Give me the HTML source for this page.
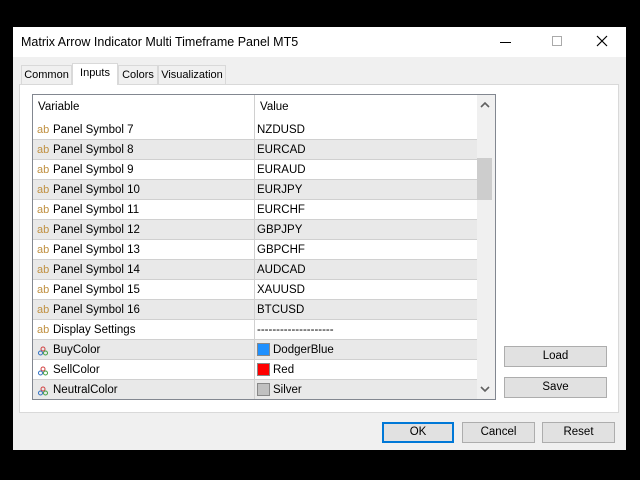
<!DOCTYPE html><html><head><style>
*{margin:0;padding:0;box-sizing:border-box}
body{width:640px;height:480px;background:#000;font-family:"Liberation Sans",sans-serif;font-size:11.5px;color:#000;position:relative;overflow:hidden}
.a{position:absolute}
.win{left:13px;top:27px;width:613px;height:423px;background:#f0f0f0}
.title{left:0;top:0;width:613px;height:30px;background:#fff}
.tab{top:38px;height:19px;border:1px solid #d9d9d9;border-bottom:none;background:#f0f0f0;text-align:center;line-height:19px;font-size:11px}
.panel{left:6px;top:57px;width:600px;height:329px;background:#fff;border:1px solid #d9d9d9}
.list{left:19px;top:67px;width:464px;height:306px;border:1px solid #828790;background:#fff;overflow:hidden}
.row{position:absolute;left:0;width:444px;height:20px;border-bottom:1px solid #d0d0d0;line-height:20px}
.g{background:#e9e9e9}
.c1{position:absolute;left:20px}
.c2{position:absolute;left:224px}
.sep{position:absolute;left:221px;top:0;width:1px;height:20px;background:#d0d0d0}
.ab{position:absolute;left:4px;color:#c09040;font-size:11px}
.btn{height:21px;background:#e1e1e1;border:1px solid #adadad;text-align:center;line-height:19px}
.sw{position:absolute;left:224px;top:3px;width:13px;height:13px;border:1px solid #888}
.ic{position:absolute;left:5px;top:6px}
</style></head><body>
<div class="a win">
<div class="a title"><div class="a" style="left:8px;top:8px;font-size:12.5px">Matrix Arrow Indicator Multi Timeframe Panel MT5</div>
<div class="a" style="left:487px;top:15px;width:11px;height:1px;background:#000"></div>
<div class="a" style="left:539px;top:9px;width:10px;height:10px;border:1px solid #aaa"></div>
<svg class="a" style="left:583px;top:8px" width="12" height="12"><path d="M1 1L11 11M11 1L1 11" stroke="#000" stroke-width="1.2"/></svg>
</div>
<div class="a panel"></div>
<div class="a tab" style="left:8px;width:51px">Common</div>
<div class="a tab" style="left:59px;top:36px;height:22px;width:46px;background:#fff;line-height:18px">Inputs</div>
<div class="a tab" style="left:105px;width:40px">Colors</div>
<div class="a tab" style="left:145px;width:68px">Visualization</div>
<div class="a list">
<div class="row" style="top:0;height:25px;line-height:25px;border-bottom:none"><span class="c1" style="left:5px">Variable</span><div class="sep" style="height:25px"></div><span class="c2" style="left:227px">Value</span></div>
<div class="row" style="top:25px"><span class="ab">ab</span><span class="c1">Panel Symbol 7</span><div class="sep"></div><span class="c2">NZDUSD</span></div>
<div class="row g" style="top:45px"><span class="ab">ab</span><span class="c1">Panel Symbol 8</span><div class="sep"></div><span class="c2">EURCAD</span></div>
<div class="row" style="top:65px"><span class="ab">ab</span><span class="c1">Panel Symbol 9</span><div class="sep"></div><span class="c2">EURAUD</span></div>
<div class="row g" style="top:85px"><span class="ab">ab</span><span class="c1">Panel Symbol 10</span><div class="sep"></div><span class="c2">EURJPY</span></div>
<div class="row" style="top:105px"><span class="ab">ab</span><span class="c1">Panel Symbol 11</span><div class="sep"></div><span class="c2">EURCHF</span></div>
<div class="row g" style="top:125px"><span class="ab">ab</span><span class="c1">Panel Symbol 12</span><div class="sep"></div><span class="c2">GBPJPY</span></div>
<div class="row" style="top:145px"><span class="ab">ab</span><span class="c1">Panel Symbol 13</span><div class="sep"></div><span class="c2">GBPCHF</span></div>
<div class="row g" style="top:165px"><span class="ab">ab</span><span class="c1">Panel Symbol 14</span><div class="sep"></div><span class="c2">AUDCAD</span></div>
<div class="row" style="top:185px"><span class="ab">ab</span><span class="c1">Panel Symbol 15</span><div class="sep"></div><span class="c2">XAUUSD</span></div>
<div class="row g" style="top:205px"><span class="ab">ab</span><span class="c1">Panel Symbol 16</span><div class="sep"></div><span class="c2">BTCUSD</span></div>
<div class="row" style="top:225px"><span class="ab">ab</span><span class="c1">Display Settings</span><div class="sep"></div><span class="c2">--------------------</span></div>
<div class="row g" style="top:245px"><svg class="ic" width="10" height="10"><circle cx="5" cy="3" r="2" fill="none" stroke="#d04040"/><circle cx="2.5" cy="7" r="2" fill="none" stroke="#3070c0"/><circle cx="7.5" cy="7" r="2" fill="none" stroke="#40a040"/></svg><span class="c1">BuyColor</span><div class="sep"></div><div class="sw" style="background:#1e90ff"></div><span class="c2" style="left:240px">DodgerBlue</span></div>
<div class="row" style="top:265px"><svg class="ic" width="10" height="10"><circle cx="5" cy="3" r="2" fill="none" stroke="#d04040"/><circle cx="2.5" cy="7" r="2" fill="none" stroke="#3070c0"/><circle cx="7.5" cy="7" r="2" fill="none" stroke="#40a040"/></svg><span class="c1">SellColor</span><div class="sep"></div><div class="sw" style="background:#f00"></div><span class="c2" style="left:240px">Red</span></div>
<div class="row g" style="top:285px"><svg class="ic" width="10" height="10"><circle cx="5" cy="3" r="2" fill="none" stroke="#d04040"/><circle cx="2.5" cy="7" r="2" fill="none" stroke="#3070c0"/><circle cx="7.5" cy="7" r="2" fill="none" stroke="#40a040"/></svg><span class="c1">NeutralColor</span><div class="sep"></div><div class="sw" style="background:#c0c0c0"></div><span class="c2" style="left:240px">Silver</span></div>
<div class="a" style="left:444px;top:0;width:18px;height:304px;background:#f0f0f0"></div>
<div class="a" style="left:444px;top:63px;width:15px;height:42px;background:#cdcdcd"></div>
<svg class="a" style="left:447px;top:6px" width="10" height="8"><path d="M1 6L5 2L9 6" stroke="#606060" stroke-width="1.6" fill="none"/></svg>
<svg class="a" style="left:447px;top:290px" width="10" height="8"><path d="M1 2L5 6L9 2" stroke="#606060" stroke-width="1.6" fill="none"/></svg>
</div>
<div class="a btn" style="left:491px;top:319px;width:103px">Load</div>
<div class="a btn" style="left:491px;top:350px;width:103px">Save</div>
<div class="a btn" style="left:369px;top:395px;width:72px;border:2px solid #0078d7;line-height:17px">OK</div>
<div class="a btn" style="left:449px;top:395px;width:73px">Cancel</div>
<div class="a btn" style="left:529px;top:395px;width:73px">Reset</div>
</div>
</body></html>
